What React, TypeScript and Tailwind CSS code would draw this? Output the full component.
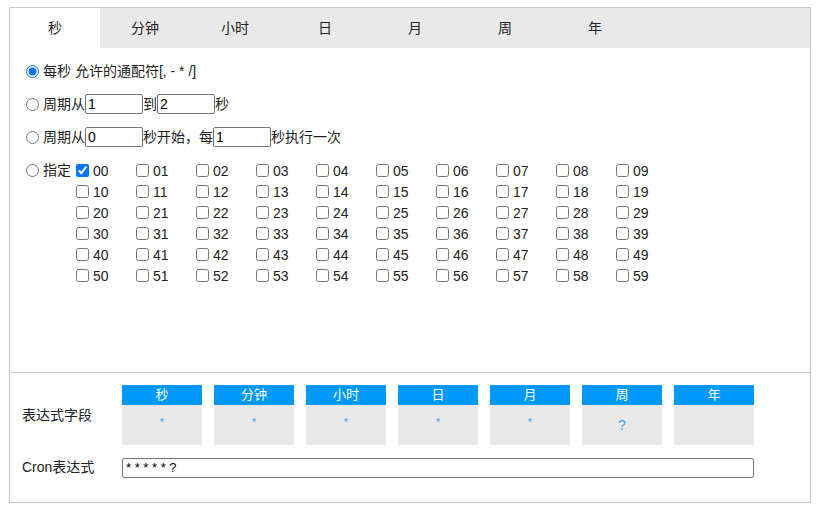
import { useState } from "react";

const tabs = ["秒", "分钟", "小时", "日", "月", "周", "年"];
const fields = [
  { name: "秒", value: "*" },
  { name: "分钟", value: "*" },
  { name: "小时", value: "*" },
  { name: "日", value: "*" },
  { name: "月", value: "*" },
  { name: "周", value: "?" },
  { name: "年", value: "" },
];

const font = {
  fontFamily: '"Liberation Sans", Arial, "Noto Sans CJK SC", sans-serif',
};

function NumInput({ value }: { value: string }) {
  return (
    <input
      defaultValue={value}
      className="h-[20px] w-[58px] rounded-[2px] border border-[#767676] bg-white px-[2px] text-[14px] text-black outline-none"
    />
  );
}

export default function App() {
  const [mode, setMode] = useState(0);
  const [checked, setChecked] = useState<number[]>([0]);

  const toggle = (n: number) =>
    setChecked((c) => (c.includes(n) ? c.filter((x) => x !== n) : [...c, n]));

  const radio = (i: number) => (
    <input
      type="radio"
      name="second"
      checked={mode === i}
      onChange={() => setMode(i)}
      className="m-0 h-[13px] w-[13px] accent-[#0075ff]"
    />
  );

  return (
    <div style={font} className="h-[513px] w-[820px] bg-white pl-[9px] pt-[7px] text-[14px] text-[#222]">
      <div className="flex h-[496px] w-[802px] flex-col border border-[#c8c8c8]">
        <div className="flex h-[40px] bg-[#e9e9e9]">
          {tabs.map((t, i) => (
            <div
              key={t}
              className={`flex w-[90px] items-center justify-center text-[14px] ${
                i === 0 ? "bg-white" : ""
              }`}
            >
              {t}
            </div>
          ))}
        </div>

        <div className="flex flex-1 flex-col gap-[13px] pl-[16px] pt-[13px]">
          <div className="flex h-[20px] items-center gap-[4px]">
            {radio(0)}
            <span>每秒 允许的通配符[, - * /]</span>
          </div>
          <div className="flex h-[20px] items-center">
            {radio(1)}
            <span className="ml-[4px]">周期从</span>
            <NumInput value="1" />
            <span>到</span>
            <NumInput value="2" />
            <span>秒</span>
          </div>
          <div className="flex h-[20px] items-center">
            {radio(2)}
            <span className="ml-[4px]">周期从</span>
            <NumInput value="0" />
            <span>秒开始，每</span>
            <NumInput value="1" />
            <span>秒执行一次</span>
          </div>
          <div className="flex items-start">
            <div className="flex h-[20px] items-center">
              {radio(3)}
              <span className="ml-[4px] w-[33px]">指定</span>
            </div>
            <div className="grid grid-cols-[repeat(10,60px)]">
              {Array.from({ length: 60 }, (_, n) => (
                <label key={n} className="flex h-[21px] items-center gap-[4px] leading-none">
                  <input
                    type="checkbox"
                    checked={checked.includes(n)}
                    onChange={() => toggle(n)}
                    className="m-0 h-[13px] w-[13px] accent-[#0075ff]"
                  />
                  <span>{String(n).padStart(2, "0")}</span>
                </label>
              ))}
            </div>
          </div>
        </div>

        <div className="flex h-[130px] flex-col gap-[12px] border-t border-[#c8c8c8] px-[12px] pt-[12px]">
          <div className="flex items-center">
            <span className="w-[100px]">表达式字段</span>
            <div className="flex gap-[12px]">
              {fields.map((f) => (
                <div key={f.name} className="w-[80px]">
                  <div className="flex h-[20px] items-center justify-center bg-[#0099ff] text-[13px] text-white">
                    {f.name}
                  </div>
                  <div
                    className={`flex h-[40px] items-center justify-center bg-[#e9e9e9] text-[#3a9cf0] ${
                      f.value === "*" ? "pb-[6px] text-[11px]" : "text-[14px]"
                    }`}
                  >
                    {f.value}
                  </div>
                </div>
              ))}
            </div>
          </div>
          <div className="flex items-center">
            <span className="w-[100px]">Cron表达式</span>
            <input
              readOnly
              value="* * * * * ?"
              className="h-[20px] w-[632px] rounded-[2px] border border-[#767676] bg-white px-[3px] text-[13px] text-black outline-none"
            />
          </div>
        </div>
      </div>
    </div>
  );
}
